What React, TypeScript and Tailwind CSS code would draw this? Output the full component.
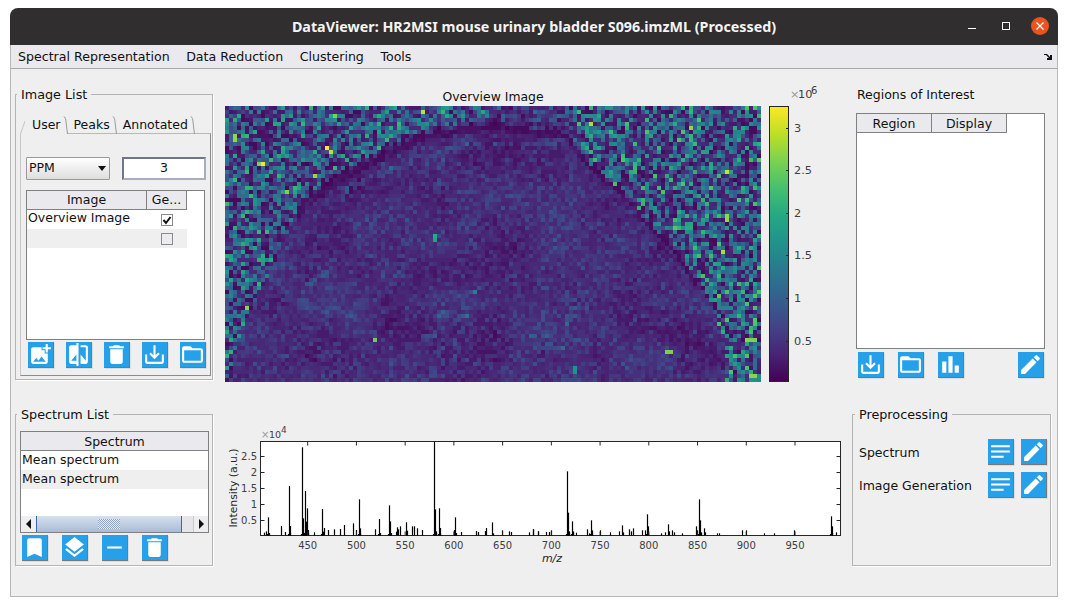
import type { ReactNode } from 'react'
import {
  MdAddPhotoAlternate,
  MdBarChart,
  MdBookmark,
  MdCompare,
  MdDelete,
  MdEdit,
  MdFolderOpen,
  MdLayers,
  MdNotes,
  MdRemove,
  MdSaveAlt,
} from 'react-icons/md'

const VIRIDIS = ['#440154', '#482475', '#414487', '#355f8d', '#2a788e', '#21918c', '#22a884', '#44bf70', '#7ad151', '#bddf26', '#fde725']

function hexToRgb(h: string) {
  return [parseInt(h.slice(1, 3), 16), parseInt(h.slice(3, 5), 16), parseInt(h.slice(5, 7), 16)]
}

function viridis(t: number) {
  const p = Math.max(0, Math.min(0.9999, t)) * 10
  const i = Math.floor(p)
  const a = hexToRgb(VIRIDIS[i])
  const b = hexToRgb(VIRIDIS[i + 1])
  const f = p - i
  return `rgb(${a.map((v, k) => Math.round(v + (b[k] - v) * f)).join(',')})`
}

function makeRng(seed: number) {
  let s = seed
  return () => {
    s |= 0
    s = (s + 0x6d2b79f5) | 0
    let t = Math.imul(s ^ (s >>> 15), 1 | s)
    t = (t + Math.imul(t ^ (t >>> 7), 61 | t)) ^ t
    return ((t ^ (t >>> 14)) >>> 0) / 4294967296
  }
}

// tissue outline, screen pixels
const EDGE: [number, number][] = [
  [226, 384], [229, 375], [245, 320], [262, 290], [282, 245], [298, 207], [335, 178], [375, 157], [425, 133],
  [492, 123], [567, 133], [590, 167], [623, 193], [657, 233], [673, 247], [707, 297], [723, 333], [727, 384],
]

const FILAMENTS: [number, number][][] = [
  [[533, 337], [567, 330], [570, 307], [580, 307]],
  [[535, 345], [570, 347]],
  [[422, 340], [442, 330]],
  [[438, 313], [475, 317]],
  [[332, 260], [332, 270], [308, 283]],
  [[345, 190], [400, 165], [470, 143], [555, 143]],
  [[300, 300], [330, 315]],
  [[440, 345], [445, 380]],
]

const HOT: [number, number, number][] = [
  [264, 163, 1], [328, 148, 1], [234, 138, 0.85], [422, 113, 0.9], [434, 235, 0.62], [436, 239, 0.6], [590, 123, 0.88],
  [690, 128, 0.85], [727, 218, 0.85], [752, 340, 0.8], [756, 340, 0.8], [753, 377, 0.82], [375, 340, 0.78], [669, 351, 0.8],
  [330, 153, 0.9], [575, 370, 0.5], [475, 293, 0.42],
]

function segDist(px: number, py: number, a: [number, number], b: [number, number]) {
  const dx = b[0] - a[0]
  const dy = b[1] - a[1]
  const t = Math.max(0, Math.min(1, ((px - a[0]) * dx + (py - a[1]) * dy) / (dx * dx + dy * dy)))
  return Math.hypot(px - a[0] - t * dx, py - a[1] - t * dy)
}

function lineDist(px: number, py: number, line: [number, number][]) {
  let d = 1e9
  for (let i = 0; i < line.length - 1; i++) d = Math.min(d, segDist(px, py, line[i], line[i + 1]))
  return d
}

function insideTissue(px: number, py: number) {
  let inside = false
  const poly = EDGE
  for (let i = 0, j = poly.length - 1; i < poly.length; j = i++) {
    const [xi, yi] = poly[i]
    const [xj, yj] = poly[j]
    if (yi > py !== yj > py && px < ((xj - xi) * (py - yi)) / (yj - yi) + xi) inside = !inside
  }
  return inside
}

function buildHeatmap() {
  const rng = makeRng(96)
  const W = 134
  const H = 69
  const gw = 20
  const lattice = Array.from({ length: (gw + 2) * (gw + 2) }, () => rng())
  const smooth = (x: number, y: number) => {
    const gx = (x / W) * gw
    const gy = (y / H) * gw * 0.5
    const ix = Math.floor(gx)
    const iy = Math.floor(gy)
    const fx = gx - ix
    const fy = gy - iy
    const at = (a: number, b: number) => lattice[b * (gw + 2) + a]
    return (
      at(ix, iy) * (1 - fx) * (1 - fy) + at(ix + 1, iy) * fx * (1 - fy) + at(ix, iy + 1) * (1 - fx) * fy + at(ix + 1, iy + 1) * fx * fy
    )
  }
  const bins = new Map<number, string[]>()
  const LEVELS = 48
  for (let y = 0; y < H; y++) {
    for (let x = 0; x < W; x++) {
      const px = 225 + x * 4 + 2
      const py = 106 + y * 4 + 2
      const d = lineDist(px, py, EDGE)
      const inTissue = insideTissue(px, py)
      // the dark rim is only wide along the upper arc
      const rim = px > 295 && px < 565 ? 7 : px >= 565 && py < 290 ? 3 : 0
      let v: number
      if (inTissue) {
        v = 0.015 + 0.1 * smooth(x, y) + 0.17 * rng() * rng() + 0.035 * rng()
        if (d < rim) v *= 0.4
        for (const f of FILAMENTS) {
          if (lineDist(px, py, f) < 3 && rng() > 0.3) v += 0.05 + 0.1 * rng()
        }
      } else {
        const r = rng()
        const strength = px > 490 && px < 575 && py < 125 ? 0.6 : px > 570 ? 1.05 : 0.95
        if (r < 0.42) v = 0.02 + 0.12 * rng()
        else if (r < 0.88) v = strength * (0.2 + 0.28 * rng())
        else v = strength * (0.45 + 0.25 * rng())
        if (rng() > 0.99) v += 0.2
        if (d < rim * 0.6) v *= 0.4
      }
      for (const h of HOT) {
        if (Math.abs(h[0] - px) <= 2 && Math.abs(h[1] - py) <= 2) v = h[2]
      }
      const level = Math.min(LEVELS - 1, Math.floor(v * LEVELS))
      if (!bins.has(level)) bins.set(level, [])
      bins.get(level)!.push(`M${x} ${y}h1v1h-1z`)
    }
  }
  return [...bins.entries()].map(([level, cells]) => ({ fill: viridis((level + 0.5) / LEVELS), d: cells.join('') }))
}

const HEATMAP = buildHeatmap()

// spectrum peaks as [x px, top y px]
const PEAKS_A = [
  [118, 338], [124, 334], [130, 292], [170, 318], [182, 336], [193, 198], [196, 318], [232, 82], [235, 295], [241, 213], [245, 305],
  [247, 265], [250, 330], [268, 337], [291, 267], [294, 335], [298, 324], [310, 330], [328, 328], [347, 327], [358, 315], [385, 310],
  [394, 330], [403, 238], [406, 325], [451, 328], [463, 297], [493, 256], [496, 304], [513, 335], [518, 322], [521, 328], [526, 319],
  [544, 307], [546, 332], [563, 319], [568, 319], [577, 325], [592, 330], [628, 64], [631, 268], [634, 334], [643, 265], [646, 324],
  [691, 292], [688, 330], [709, 336], [755, 333], [760, 336], [784, 324], [781, 333], [802, 307], [805, 340], [832, 331], [853, 334],
  [859, 336], [913, 337], [925, 328], [940, 334],
].map(([x, y]) => [225 + x / 3, 420 + y / 3])
const PEAKS_B = [
  [10, 328], [25, 334], [49, 336], [58, 336], [64, 331], [112, 154], [115, 278], [118, 334], [127, 304], [130, 334], [139, 338],
  [172, 328], [178, 340], [184, 301], [187, 331], [211, 331], [241, 337], [268, 334], [277, 316], [280, 337], [298, 328], [304, 334],
  [310, 325], [337, 331], [346, 331], [352, 283], [355, 319], [394, 340], [406, 337], [415, 313], [418, 334], [427, 331], [433, 337],
  [457, 340], [499, 319], [502, 331], [508, 238], [511, 301], [514, 337], [523, 325], [526, 337], [562, 340], [568, 340], [637, 331],
  [649, 331], [703, 340], [733, 340], [793, 331], [904, 289], [907, 319], [919, 337],
].map(([x, y]) => [530 + x / 3, 420 + y / 3])
// low shoulders sitting next to the tall peaks
const PEAKS = [
  ...PEAKS_A,
  ...PEAKS_B,
  ...[...PEAKS_A, ...PEAKS_B]
    .filter(([, y]) => y < 522)
    .flatMap(([x]) => [
      [x + 1, 533],
      [x - 1, 534],
    ]),
]

const XTICKS = [450, 500, 550, 600, 650, 700, 750, 800, 850, 900, 950]
const YTICKS = [
  ['0.5', 520],
  ['1', 504],
  ['1.5', 488],
  ['2', 472],
  ['2.5', 456],
] as const
const CBAR_TICKS = [
  ['3', 128],
  ['2.5', 170],
  ['2', 213],
  ['1.5', 255],
  ['1', 298],
  ['0.5', 341],
] as const

function IconButton({ children }: { children: ReactNode }) {
  return (
    <button className="flex h-[26px] w-[26px] items-center justify-center border-r border-b border-[#777] bg-[#27a0ea] text-white shadow-[1px_1px_0_#dcdcdc]">
      {children}
    </button>
  )
}

function Panel({ title, className, children }: { title: string; className: string; children: ReactNode }) {
  return (
    <fieldset className={`border border-[#b4b4b4] shadow-[1px_1px_0_#fff] ${className}`}>
      <legend className="ml-[1px] h-4 px-1 text-[12.75px] leading-[18px] text-[#111]">{title}</legend>
      {children}
    </fieldset>
  )
}

function Tab({ label, active }: { label: string; active?: boolean }) {
  return (
    <div className={`flex h-[18px] items-end ${active ? 'bg-[#efefef]' : ''}`}>
      {active && (
        <svg width="5" height="18" className="shrink-0">
          <path d="M5 5 L0.5 18" fill="none" stroke="#c4c4c4" />
        </svg>
      )}
      <span className={`pr-[2px] pb-[1px] leading-4 ${active ? 'pl-[7px]' : 'pl-[6px]'}`}>{label}</span>
      <svg width="5" height="18" className="shrink-0">
        <path d="M0.5 0 C2 1 3 3 3 6 L4.5 18" fill="none" stroke="#9a9a9a" />
      </svg>
    </div>
  )
}

function HeaderCell({ width, children }: { width: string; children: ReactNode }) {
  return <div className={`${width} h-[19px] border-r border-b border-[#808080] bg-[#eae9ed] text-center`}>{children}</div>
}

function Check({ checked }: { checked?: boolean }) {
  return (
    <span className={`flex h-3 w-3 items-center justify-center border border-[#8a8a8a] ${checked ? 'bg-white' : 'bg-[#ececf0]'}`}>
      {checked && (
        <svg width="10" height="10" viewBox="0 0 10 10">
          <path d="M1.5 5 L4 8 L8.5 2" fill="none" stroke="#111" strokeWidth="2" />
        </svg>
      )}
    </span>
  )
}

function Scrollbar() {
  return (
    <div className="flex h-4 items-stretch bg-[#e6e6ea]">
      <div className="flex w-[15px] items-center justify-center bg-[#eeeef1]">
        <svg width="6" height="10">
          <path d="M5 0 V10 L0 5 Z" fill="#111" />
        </svg>
      </div>
      <div className="flex w-[146px] items-center justify-center border-x border-[#3d68a4] bg-gradient-to-b from-[#d6e0ee] to-[#a9bcd6]">
        <div className="h-[10px] w-[22px] bg-[conic-gradient(#8ea3c2_25%,#e8eef6_0_50%,#8ea3c2_0_75%,#e8eef6_0)] bg-[length:2px_2px]" />
      </div>
      <div className="flex-1" />
      <div className="flex w-[15px] items-center justify-center border-l border-[#c8c8c8] bg-[#eeeef1]">
        <svg width="6" height="10">
          <path d="M1 0 V10 L6 5 Z" fill="#111" />
        </svg>
      </div>
    </div>
  )
}

function ImageList() {
  return (
    <Panel title="Image List" className="h-[294px] w-[198px]">
      <div className="relative z-10 flex pt-[14px] pl-[4px] -mb-px text-[12.5px] text-[#111]">
        <Tab label="User" active />
        <Tab label="Peaks" />
        <Tab label="Annotated" />
      </div>
      <div className="ml-[4px] h-[243px] w-[191px] border-t border-l border-t-[#b9b9b9] border-l-[#c8c8c8] border-r border-b border-r-[#8c8c8c] border-b-[#8c8c8c] pt-[23px] pl-[5px]">
        <div className="flex gap-3">
          <div className="flex h-[23px] w-[84px] items-center justify-between rounded-[1px] border border-[#9a9a9a] bg-gradient-to-b from-white to-[#dedede] pr-[3px] pl-[2px] text-[#111]">
            <span>PPM</span>
            <svg width="8" height="5">
              <path d="M0 0 H8 L4 5 Z" fill="#111" />
            </svg>
          </div>
          <div className="flex h-[23px] w-[84px] items-center justify-center border-2 border-t-[#70768a] border-l-[#70768a] border-r-[#a9aebf] border-b-[#a9aebf] bg-white text-[#111]">
            3
          </div>
        </div>
        <div className="mt-[10px] h-[150px] w-[179px] border border-[#808080] bg-white">
          <div className="flex">
            <HeaderCell width="w-[120px] leading-[18px]">Image</HeaderCell>
            <HeaderCell width="w-[40px] leading-[18px]">Ge...</HeaderCell>
          </div>
          <div className="flex h-[19px] w-[160px] items-center bg-white">
            <div className="w-[120px] pb-[2px] pl-px">Overview Image</div>
            <div className="flex flex-1 justify-center">
              <Check checked />
            </div>
          </div>
          <div className="flex h-[19px] w-[160px] items-center bg-[#efefef]">
            <div className="w-[120px]" />
            <div className="flex flex-1 justify-center">
              <Check />
            </div>
          </div>
        </div>
        <div className="mt-[2px] ml-[2px] flex gap-3">
          <IconButton>
            <MdAddPhotoAlternate size={25} />
          </IconButton>
          <IconButton>
            <MdCompare size={25} />
          </IconButton>
          <IconButton>
            <MdDelete size={25} />
          </IconButton>
          <IconButton>
            <MdSaveAlt size={25} />
          </IconButton>
          <IconButton>
            <MdFolderOpen size={25} />
          </IconButton>
        </div>
      </div>
    </Panel>
  )
}

function SpectrumList() {
  return (
    <Panel title="Spectrum List" className="h-[160px] w-[198px]">
      <div className="mt-[9px] ml-[4px] flex h-[102px] w-[189px] flex-col border border-[#808080] bg-white">
        <div className="h-[19px] border-b border-[#808080] bg-[#eae9ed] text-center leading-[20px]">Spectrum</div>
        <div className="flex h-[19px] items-center pl-px">Mean spectrum</div>
        <div className="flex h-[19px] items-center bg-[#efefef] pl-px">Mean spectrum</div>
        <div className="flex-1" />
        <Scrollbar />
      </div>
      <div className="mt-[2px] ml-[6px] flex gap-[14px]">
        <IconButton>
          <MdBookmark size={25} />
        </IconButton>
        <IconButton>
          <MdLayers size={25} />
        </IconButton>
        <IconButton>
          <MdRemove size={25} />
        </IconButton>
        <IconButton>
          <MdDelete size={25} />
        </IconButton>
      </div>
    </Panel>
  )
}

function Overview() {
  return (
    <div className="flex pl-3">
      <div className="w-[536px]">
        <div className="h-5 pt-[3px] text-center text-[12.4px] leading-4">Overview Image</div>
        <svg width="536" height="276" viewBox="0 0 134 69" shapeRendering="crispEdges" className="block">
          {HEATMAP.map((b) => (
            <path key={b.fill} d={b.d} fill={b.fill} />
          ))}
        </svg>
      </div>
      <svg width="64" height="296" className="ml-2 shrink-0 overflow-visible" fontFamily="'DejaVu Sans', sans-serif">
        <defs>
          <linearGradient id="cbar" x1="0" y1="1" x2="0" y2="0">
            {VIRIDIS.map((c, i) => (
              <stop key={c} offset={i / 10} stopColor={c} />
            ))}
          </linearGradient>
        </defs>
        <g transform="translate(-769 -86)">
          <rect x="769.5" y="106.5" width="19" height="275" fill="url(#cbar)" stroke="#262626" />
          {CBAR_TICKS.map(([label, y]) => (
            <g key={label}>
              <line x1="786" x2="789" y1={y + 0.5} y2={y + 0.5} stroke="#262626" />
              <text x="794" y={y + 4} fontSize="11.3" fill="#404040">
                {label}
              </text>
            </g>
          ))}
          <text x="790" y="98" fontSize="11.3" fill="#9a9a9a">
            ×
          </text>
          <text x="798" y="98" fontSize="11.3" fill="#404040">
            10
          </text>
          <text x="811" y="94" fontSize="10" fill="#404040">
            6
          </text>
        </g>
      </svg>
    </div>
  )
}

function SpectrumPlot() {
  const left = 260.5
  const right = 840.5
  const top = 441.5
  const base = 535.5
  const tx = (mz: number) => 307.7 + (mz - 450) * 0.9746
  return (
    <svg width="627" height="160" className="ml-3 block" fontFamily="'DejaVu Sans', sans-serif">
      <g transform="translate(-225 -406)">
        <rect x={left} y={top} width={right - left} height={base - top} fill="#fff" stroke="#262626" />
        {PEAKS.map(([x, y], i) => (
          <line key={i} x1={Math.floor(x) + 0.5} x2={Math.floor(x) + 0.5} y1={Math.max(y, top)} y2={base} stroke="#000" strokeWidth="1.2" />
        ))}
        {XTICKS.map((m) => (
          <g key={m}>
            <line x1={tx(m)} x2={tx(m)} y1={base} y2={base - 4} stroke="#262626" />
            <line x1={tx(m)} x2={tx(m)} y1={top} y2={top + 4} stroke="#262626" />
            <text x={tx(m)} y="549" fontSize="10" textAnchor="middle" fill="#404040">
              {m}
            </text>
          </g>
        ))}
        {YTICKS.map(([label, y]) => (
          <g key={label}>
            <line x1={left} x2={left + 4} y1={y + 0.5} y2={y + 0.5} stroke="#262626" />
            <line x1={right} x2={right - 4} y1={y + 0.5} y2={y + 0.5} stroke="#262626" />
            <text x="257" y={y + 4} fontSize="10" textAnchor="end" fill="#404040">
              {label}
            </text>
          </g>
        ))}
        <text x="261" y="438" fontSize="10" fill="#9a9a9a">
          ×
        </text>
        <text x="269" y="438" fontSize="9.5" fill="#404040">
          10
        </text>
        <text x="281" y="433" fontSize="9" fill="#404040">
          4
        </text>
        <text transform="translate(237 488) rotate(-90)" fontSize="10.8" textAnchor="middle" fill="#262626">
          Intensity (a.u.)
        </text>
        <text x="552" y="562" fontSize="11" textAnchor="middle" fontStyle="italic" fill="#262626">
          m/z
        </text>
      </g>
    </svg>
  )
}

function RegionsOfInterest() {
  return (
    <div className="h-[294px] pl-[4px]">
      <div className="h-4 pt-px pl-px leading-4">Regions of Interest</div>
      <div className="mt-[11px] h-[236px] w-[189px] border border-[#808080] bg-white">
        <div className="flex">
          <HeaderCell width="w-[75px] leading-[20px]">Region</HeaderCell>
          <HeaderCell width="w-[75px] leading-[20px]">Display</HeaderCell>
        </div>
      </div>
      <div className="mt-[3px] ml-[2px] flex w-[186px]">
        <IconButton>
          <MdSaveAlt size={25} />
        </IconButton>
        <div className="ml-[14px]">
          <IconButton>
            <MdFolderOpen size={25} />
          </IconButton>
        </div>
        <div className="ml-[14px]">
          <IconButton>
            <MdBarChart size={25} />
          </IconButton>
        </div>
        <div className="ml-auto">
          <IconButton>
            <MdEdit size={25} />
          </IconButton>
        </div>
      </div>
    </div>
  )
}

function PreprocRow({ label }: { label: string }) {
  return (
    <div className="flex items-center">
      <span className="flex-1 pt-[2px] pl-[6px]">{label}</span>
      <div className="flex gap-[7px] pr-[3px]">
        <IconButton>
          <MdNotes size={25} />
        </IconButton>
        <IconButton>
          <MdEdit size={25} />
        </IconButton>
      </div>
    </div>
  )
}

function Preprocessing() {
  return (
    <Panel title="Preprocessing" className="h-[160px] w-[199px] [&>legend]:ml-[2px]">
      <div className="flex flex-col gap-[7px] pt-[17px]">
        <PreprocRow label="Spectrum" />
        <PreprocRow label="Image Generation" />
      </div>
    </Panel>
  )
}

export default function App() {
  return (
    <div className="h-[606px] w-[1068px] overflow-hidden bg-white pt-2 pl-[10px] font-['DejaVu_Sans',sans-serif] text-[12.5px] text-[#111]">
      <div className="flex h-[589px] w-[1048px] flex-col overflow-hidden rounded-t-lg">
        <div className="relative flex h-[37px] shrink-0 items-center justify-center bg-[#302e2e] font-['Noto_Sans',sans-serif] text-[14.3px] font-bold text-[#f4f4f4]">
          <span>DataViewer: HR2MSI mouse urinary bladder S096.imzML (Processed)</span>
          <div className="absolute top-0 right-0 flex h-[37px] items-center">
            <svg width="68" height="37">
              <line x1="8" x2="16" y1="20.5" y2="20.5" stroke="#fff" />
              <rect x="42.5" y="14.5" width="7" height="7" fill="none" stroke="#fff" />
            </svg>
            <svg width="30" height="37">
              <circle cx="12" cy="18" r="9" fill="#e95420" />
              <path d="M8.5 14.5 L15.5 21.5 M15.5 14.5 L8.5 21.5" stroke="#fff" strokeWidth="1.2" />
            </svg>
          </div>
        </div>
        <div className="flex flex-1 flex-col border-x border-b border-[#b8b8b8] bg-[#efefef]">
          <div className="flex h-6 shrink-0 items-center justify-between border-b border-[#a8a8a8] bg-[#eae9ed] pr-[4px] pl-[7px] text-[12.6px]">
            <div className="flex gap-[16.5px] pt-[2px]">
              <span>Spectral Representation</span>
              <span>Data Reduction</span>
              <span>Clustering</span>
              <span>Tools</span>
            </div>
            <svg width="9" height="8">
              <path d="M0 1 H3 L6 4 V2 L8 2 V7 H3 V5 H5 L2 2 H0 Z" fill="#111" />
            </svg>
          </div>
          <div className="grid grid-cols-[198px_639px_199px] grid-rows-[320px_160px] pt-[17px] pl-[4px]">
            <ImageList />
            <Overview />
            <RegionsOfInterest />
            <SpectrumList />
            <SpectrumPlot />
            <Preprocessing />
          </div>
        </div>
      </div>
    </div>
  )
}
